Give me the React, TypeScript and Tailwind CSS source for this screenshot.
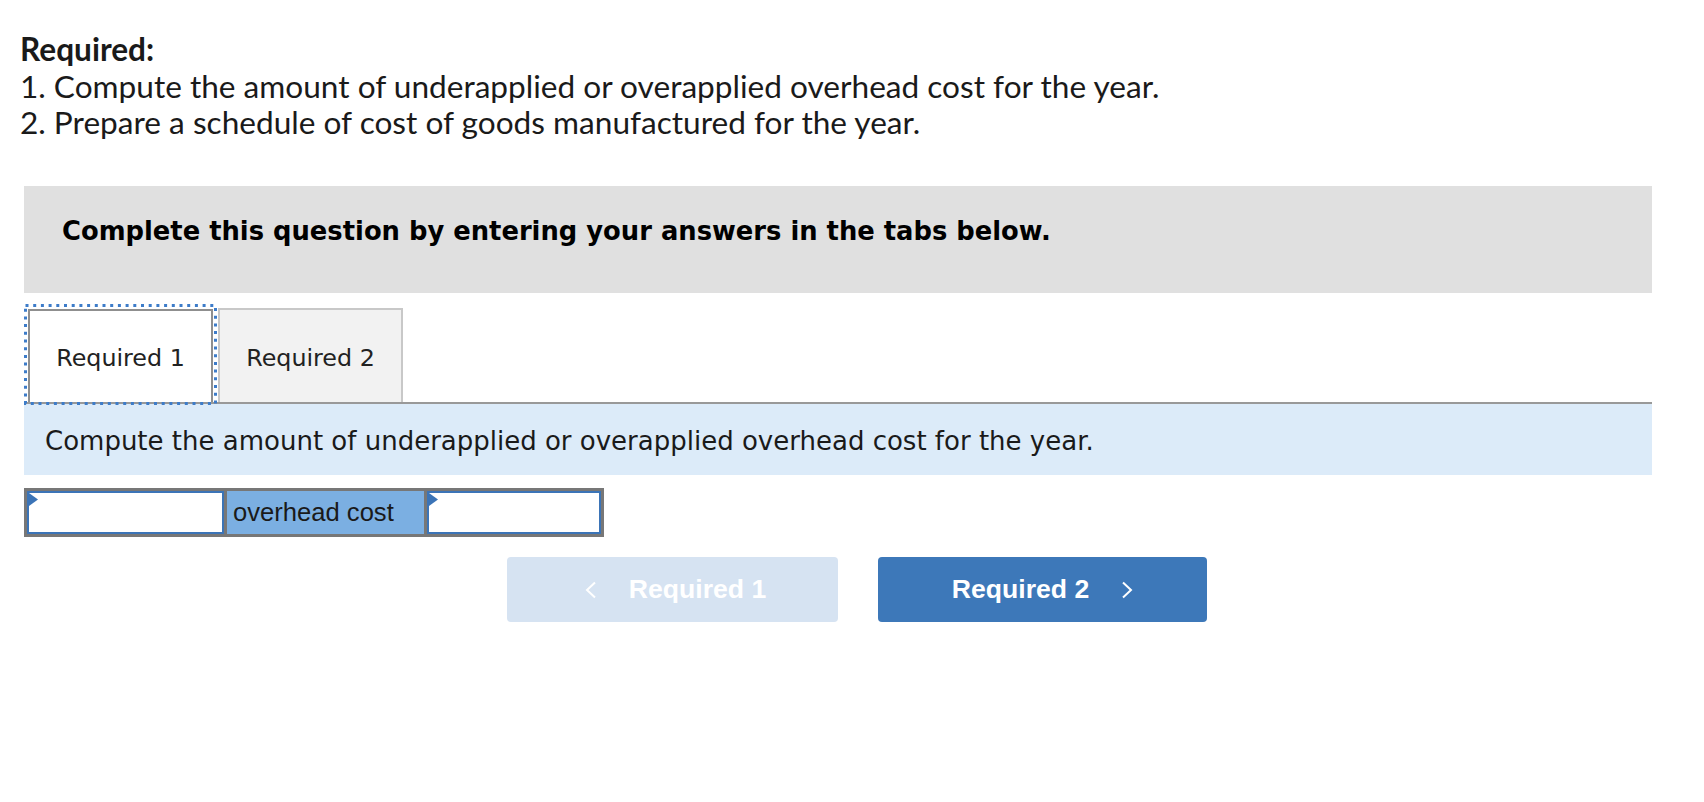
function CornerFlag() {
  return (
    <svg
      className="absolute left-0 top-0"
      width="10"
      height="14"
      viewBox="0 0 10 14"
      aria-hidden
    >
      <polygon points="0,0 9,6.5 0,13" fill="#3b74b7" />
    </svg>
  );
}

function Chevron({ dir }: { dir: "left" | "right" }) {
  return (
    <svg width="12" height="18" viewBox="0 0 12 18" aria-hidden>
      <polyline
        points={dir === "left" ? "10,1.5 2,9 10,16.5" : "2,1.5 10,9 2,16.5"}
        fill="none"
        stroke="currentColor"
        strokeWidth="2"
      />
    </svg>
  );
}

export default function App() {
  return (
    <div className="w-[1704px] h-[802px] bg-white text-[#111] overflow-hidden">
      {/* Question text */}
      <div className="pl-[20px] pt-[31px] font-['Lato','Open_Sans',sans-serif] text-[31.6px] leading-[36.5px] text-[#1a1a1a]">
        <p className="font-bold">Required:</p>
        <p>1. Compute the amount of underapplied or overapplied overhead cost for the year.</p>
        <p>2. Prepare a schedule of cost of goods manufactured for the year.</p>
      </div>

      <div className="ml-[24px] w-[1628px] mt-[45px]">
        {/* Instructions */}
        <div className="h-[107px] bg-[#e0e0e0] pl-[38px] pt-[33px]">
          <p className="font-['DejaVu_Sans',Verdana,sans-serif] font-bold text-[25.8px] leading-none text-black">
            Complete this question by entering your answers in the tabs below.
          </p>
        </div>

        {/* Tabs */}
        <div className="flex items-end gap-[5px] pl-[4px] mt-[15px] border-b-2 border-[#999]">
          <div className="relative w-[185px] h-[93px] bg-white border-2 border-b-0 border-[#8f8f8f] flex items-center justify-center pt-[6px] font-['DejaVu_Sans',Verdana,sans-serif] text-[23.8px] text-[#222]">
            Required 1
            <svg
              className="absolute left-[-6px] top-[-7px] pointer-events-none"
              width="193"
              height="101"
              viewBox="0 0 193 101"
              aria-hidden
            >
              <rect
                x="1.5"
                y="1.5"
                width="190"
                height="98"
                fill="none"
                stroke="#3d7cc9"
                strokeWidth="3"
                strokeDasharray="3 4.7"
              />
            </svg>
          </div>
          <div className="w-[185px] h-[94px] bg-[#f2f2f2] border-2 border-b-0 border-[#c8c8c8] flex items-center justify-center pt-[6px] font-['DejaVu_Sans',Verdana,sans-serif] text-[23.8px] text-[#222]">
            Required 2
          </div>
        </div>

        <div className="h-[71px] bg-[#dcebf9] flex items-center pl-[21px] pt-[4px] font-['DejaVu_Sans',Verdana,sans-serif] text-[26px] text-[#1a1a1a]">
          Compute the amount of underapplied or overapplied overhead cost for the year.
        </div>

        {/* Answer row */}
        <div className="mt-[13px] inline-flex border-[3px] border-[#777] bg-[#777] gap-[3px]">
          <div className="relative w-[197px] h-[43px] bg-white border-2 border-[#3b74b7]">
            <CornerFlag />
          </div>
          <div className="w-[197px] h-[43px] bg-[#7bafe2] flex items-center pl-[6px] font-['Liberation_Sans',Arial,sans-serif] text-[25.6px] text-[#1a1a1a]">
            overhead cost
          </div>
          <div className="relative w-[174px] h-[43px] bg-white border-2 border-[#3b74b7]">
            <CornerFlag />
          </div>
        </div>
      </div>

      {/* Navigation */}
      <div className="mt-[17px] flex justify-center gap-[40px] pl-[10px] font-['Liberation_Sans',Arial,sans-serif] font-bold text-[26.6px]">
        <button className="w-[331px] h-[65px] rounded-[4px] bg-[#d6e3f2] text-white flex items-center justify-center gap-[32px] pl-[6px] pt-[2px]">
          <Chevron dir="left" />
          Required 1
        </button>
        <button className="w-[329px] h-[65px] rounded-[4px] bg-[#3d78b9] text-white flex items-center justify-center gap-[32px] pt-[2px]">
          Required 2
          <Chevron dir="right" />
        </button>
      </div>
    </div>
  );
}
